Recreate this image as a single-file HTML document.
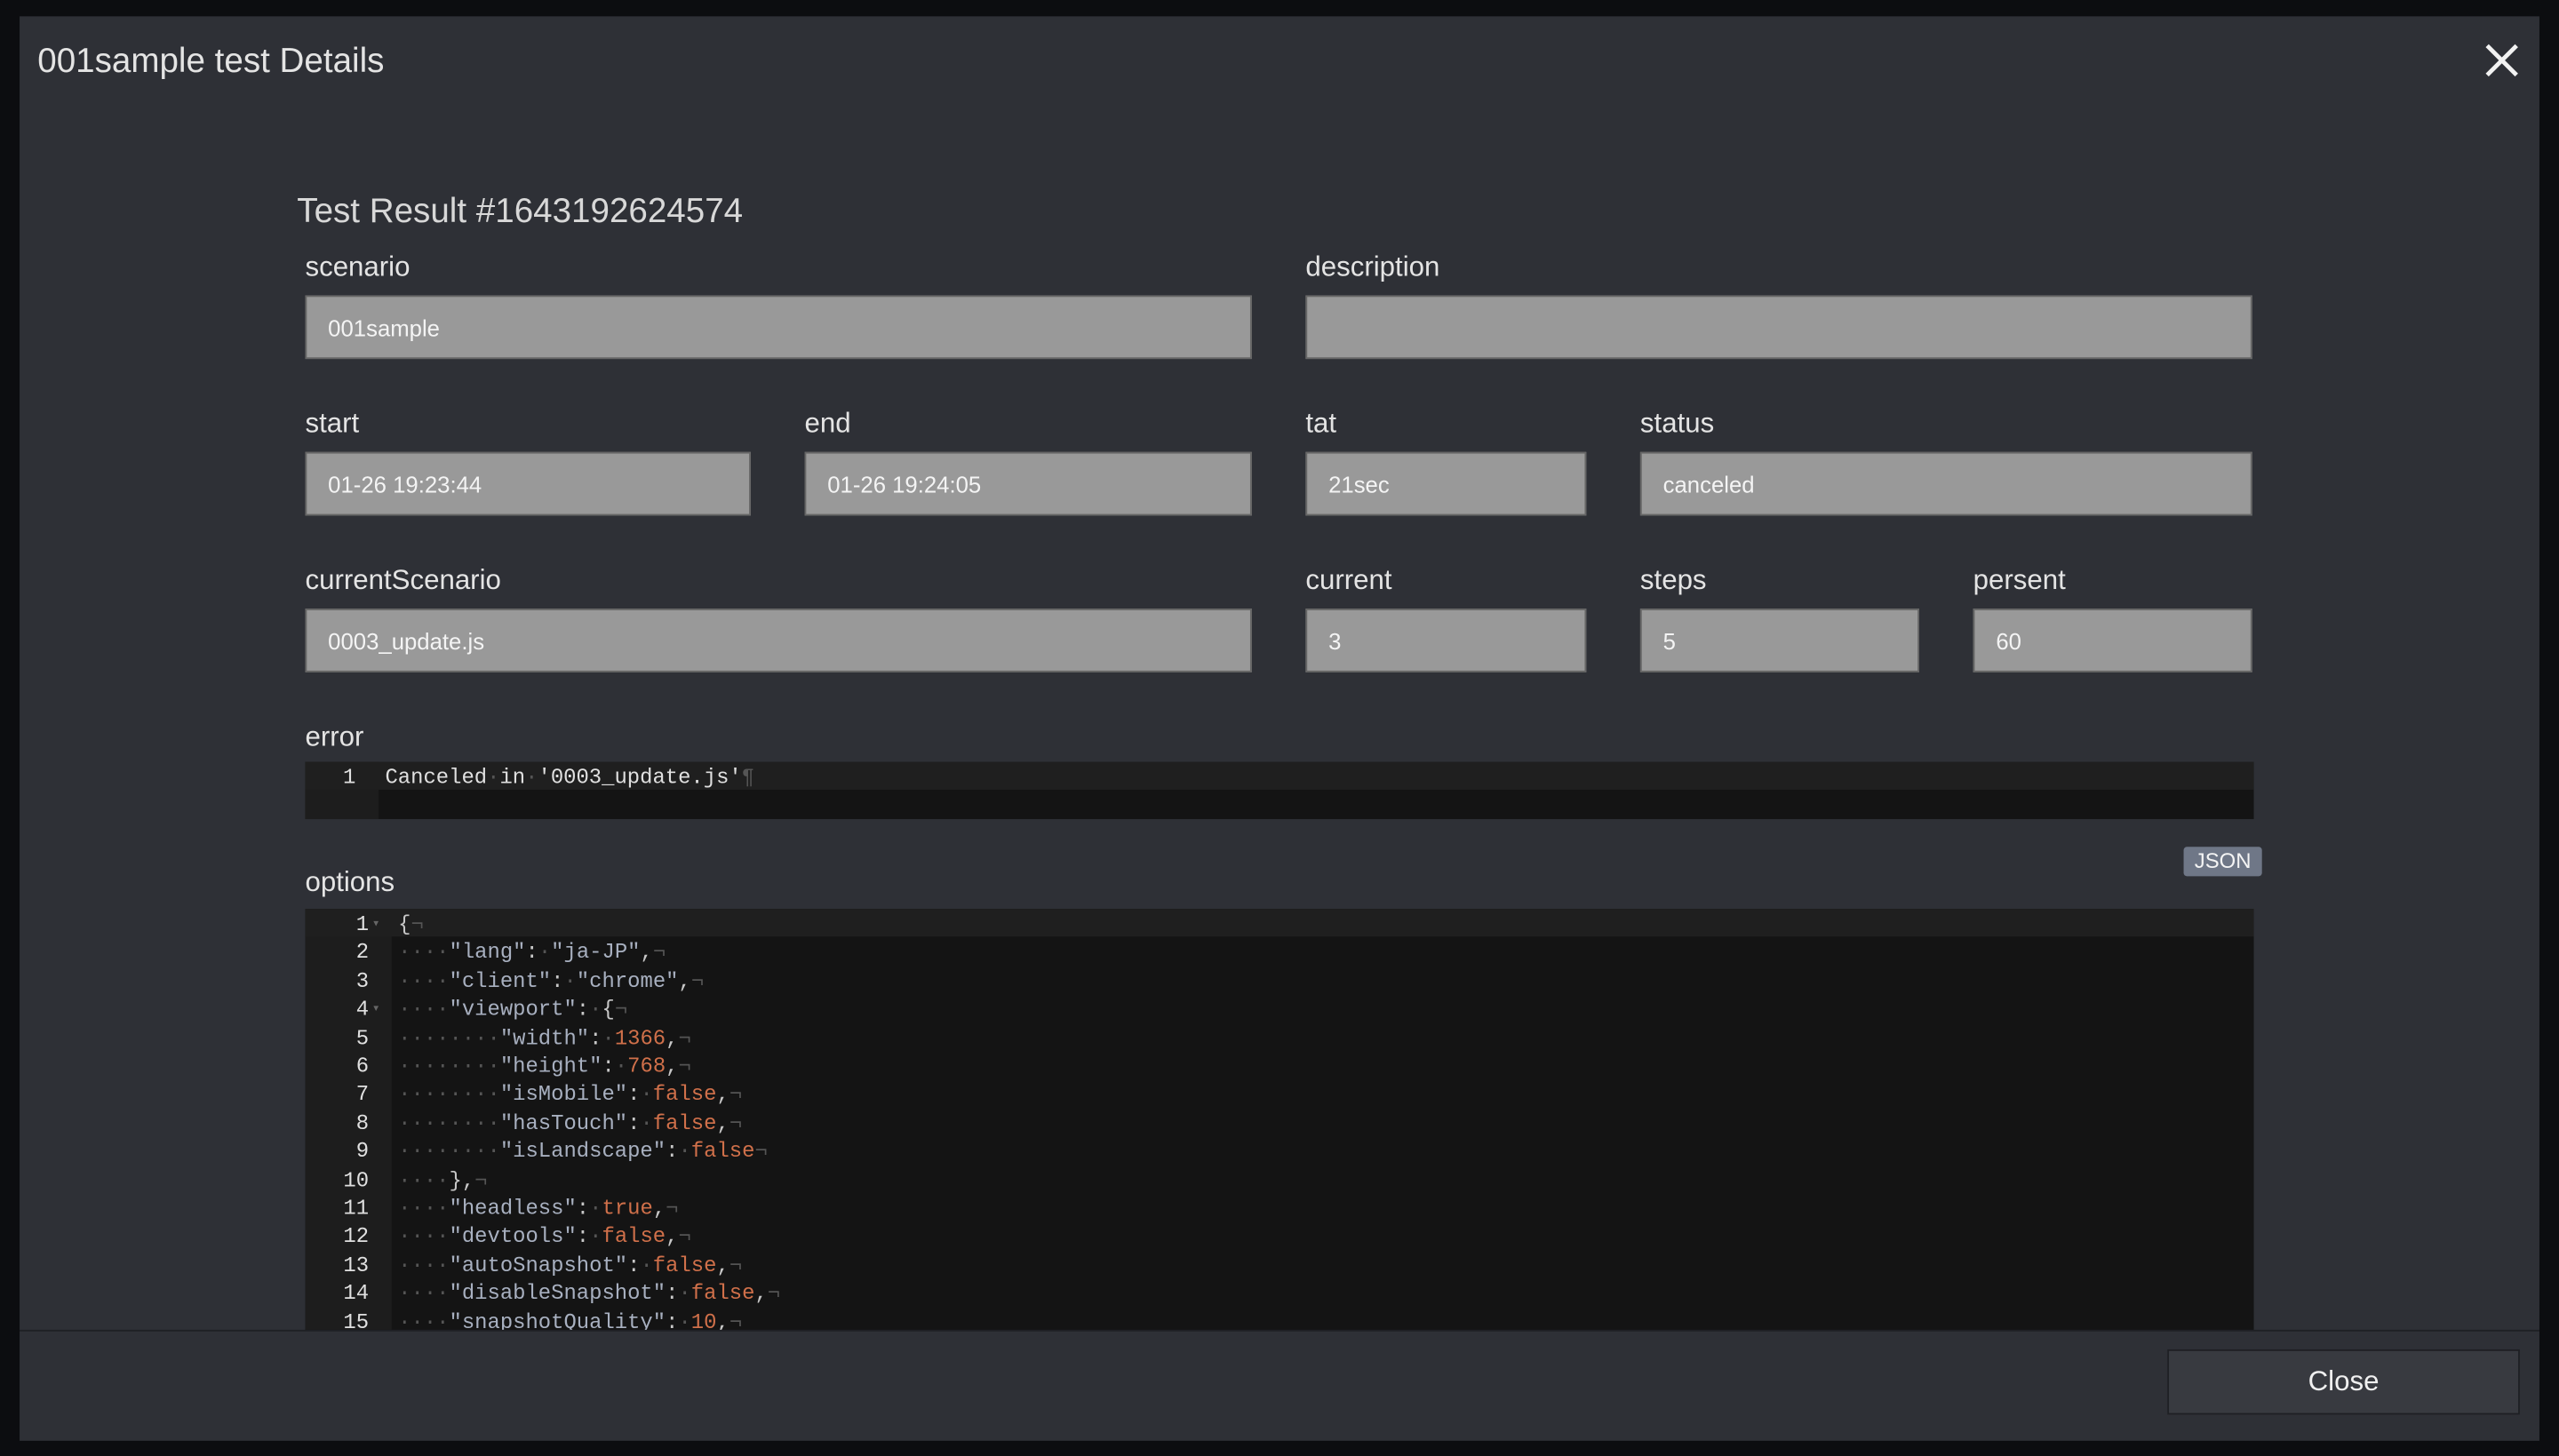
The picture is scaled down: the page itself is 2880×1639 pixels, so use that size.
<!DOCTYPE html>
<html><head><meta charset="utf-8"><style>
html,body{margin:0;padding:0;background:#0c0d10;overflow:hidden;width:2880px;height:1639px}
#w{position:absolute;left:0;top:0;width:1568px;height:892px;transform:scale(1.83673);transform-origin:0 0;font-family:"Liberation Sans","Noto Sans CJK JP",sans-serif}
.m{position:absolute;left:12px;top:10px;width:1544px;height:873px;background:#2e3036}
.a{position:absolute}
.lb{position:absolute;color:#e4e4e4;font-size:17px;top:0;margin-top:2px}
.in{position:absolute;height:39px;background:#999;border:1px solid #666;color:#f4f4f4;font-size:14px;line-height:39px;padding-left:13px;box-sizing:border-box}
.ed{position:absolute;background:#141414;font-family:"Liberation Mono","DejaVu Sans Mono",monospace;font-size:13px;color:#c8c8c8}
.gut{position:absolute;left:0;top:0;bottom:0;background:#1d1d1d}
.ln{position:absolute;height:17.4px;line-height:17.4px;white-space:pre}
.n{color:#e0e0e0;text-align:right}
.s{color:#a8b0c0}.v{color:#d0704a}.d{color:#555}
</style></head><body><div id="w">
<div class="m">
<div class="a" style="left:11px;top:16px;color:#e4e4e4;font-size:21px">001sample test Details</div>
<svg class="a" style="left:1510px;top:16px" width="22" height="22" viewBox="0 0 22 22"><path d="M2 2L20 20M20 2L2 20" stroke="#f2f2f2" stroke-width="2.6"/></svg>
<div class="a" style="left:170px;top:108px;color:#d8d8d8;font-size:21px">Test Result #1643192624574</div>
<div class="a" style="left:0;top:805px;width:1544px;height:1px;background:#1e2024"></div>
<div class="a" style="left:1316px;top:817px;width:216px;height:40px;background:#383a40;border:1px solid #1f2024;box-sizing:border-box;color:#f0f0f0;font-size:17px;line-height:38px;text-align:center">Close</div>
<div class="a" style="left:1326px;top:509px;width:48px;height:18px;background:#6f7787;border-radius:2px;color:#f4f4f4;font-size:13px;line-height:18px;text-align:center">JSON</div>
</div>
<div class="lb" style="left:187px;top:152px">scenario</div>
<div class="lb" style="left:800px;top:152px">description</div>
<div class="in" style="left:187px;top:181px;width:580px">001sample</div>
<div class="in" style="left:800px;top:181px;width:580px"></div>
<div class="lb" style="left:187px;top:248px">start</div>
<div class="lb" style="left:493px;top:248px">end</div>
<div class="lb" style="left:800px;top:248px">tat</div>
<div class="lb" style="left:1005px;top:248px">status</div>
<div class="in" style="left:187px;top:277px;width:273px">01-26 19:23:44</div>
<div class="in" style="left:493px;top:277px;width:274px">01-26 19:24:05</div>
<div class="in" style="left:800px;top:277px;width:172px">21sec</div>
<div class="in" style="left:1005px;top:277px;width:375px">canceled</div>
<div class="lb" style="left:187px;top:344px">currentScenario</div>
<div class="lb" style="left:800px;top:344px">current</div>
<div class="lb" style="left:1005px;top:344px">steps</div>
<div class="lb" style="left:1209px;top:344px">persent</div>
<div class="in" style="left:187px;top:373px;width:580px">0003_update.js</div>
<div class="in" style="left:800px;top:373px;width:172px">3</div>
<div class="in" style="left:1005px;top:373px;width:171px">5</div>
<div class="in" style="left:1209px;top:373px;width:171px">60</div>
<div class="lb" style="left:187px;top:440px">error</div>
<div class="ed" style="left:187px;top:467px;width:1194px;height:35px">
<div class="gut" style="width:45px"></div>
<div class="ln" style="left:0;top:0;width:1194px;background:#1f1f1f"></div>
<div class="ln n" style="left:0;top:1px;width:31px">1</div>
<div class="ln" style="left:49px;top:1px;color:#e0e0e0">Canceled<span class="d">·</span>in<span class="d">·</span>'0003_update.js'<span class="d">¶</span></div>
</div>
<div class="lb" style="left:187px;top:529px">options</div>
<div class="ed" style="left:187px;top:557px;width:1194px;height:258px;overflow:hidden">
<div class="gut" style="width:53px"></div>
<div class="ln" style="left:0;top:0;width:1194px;background:#1f1f1f"></div>
<div class="ln n" style="left:0;top:1px;width:39px">1<br>2<br>3<br>4<br>5<br>6<br>7<br>8<br>9<br>10<br>11<br>12<br>13<br>14<br>15</div>
<div class="ln" style="left:41px;top:1px;color:#666;font-size:8px">▾</div>
<div class="ln" style="left:41px;top:53px;color:#666;font-size:8px">▾</div>
<div class="ln" style="left:57px;top:1px;color:#c8c8c8">{<span class="d">¬</span>
<span class="d">····</span><span class="s">"lang"</span>:<span class="d">·</span><span class="s">"ja-JP"</span>,<span class="d">¬</span>
<span class="d">····</span><span class="s">"client"</span>:<span class="d">·</span><span class="s">"chrome"</span>,<span class="d">¬</span>
<span class="d">····</span><span class="s">"viewport"</span>:<span class="d">·</span>{<span class="d">¬</span>
<span class="d">········</span><span class="s">"width"</span>:<span class="d">·</span><span class="v">1366</span>,<span class="d">¬</span>
<span class="d">········</span><span class="s">"height"</span>:<span class="d">·</span><span class="v">768</span>,<span class="d">¬</span>
<span class="d">········</span><span class="s">"isMobile"</span>:<span class="d">·</span><span class="v">false</span>,<span class="d">¬</span>
<span class="d">········</span><span class="s">"hasTouch"</span>:<span class="d">·</span><span class="v">false</span>,<span class="d">¬</span>
<span class="d">········</span><span class="s">"isLandscape"</span>:<span class="d">·</span><span class="v">false</span><span class="d">¬</span>
<span class="d">····</span>},<span class="d">¬</span>
<span class="d">····</span><span class="s">"headless"</span>:<span class="d">·</span><span class="v">true</span>,<span class="d">¬</span>
<span class="d">····</span><span class="s">"devtools"</span>:<span class="d">·</span><span class="v">false</span>,<span class="d">¬</span>
<span class="d">····</span><span class="s">"autoSnapshot"</span>:<span class="d">·</span><span class="v">false</span>,<span class="d">¬</span>
<span class="d">····</span><span class="s">"disableSnapshot"</span>:<span class="d">·</span><span class="v">false</span>,<span class="d">¬</span>
<span class="d">····</span><span class="s">"snapshotQuality"</span>:<span class="d">·</span><span class="v">10</span>,<span class="d">¬</span></div>
</div>
</div></body></html>
